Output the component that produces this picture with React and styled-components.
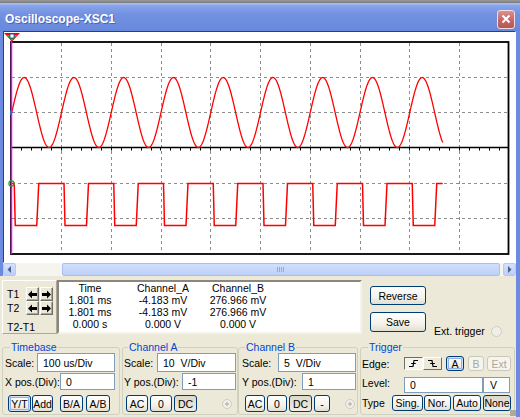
import styled, { createGlobalStyle, css } from 'styled-components'

const FRAME = '#6b8ae0'

const GlobalStyle = createGlobalStyle`
  html, body { margin: 0; padding: 0; }
  body {
    background: #ece9d8;
    font-family: "Liberation Sans", Arial, sans-serif;
    font-size: 10.5px;
    color: #000;
  }
`

const Window = styled.div`
  width: 520px;
  height: 417px;
  display: flex;
  flex-direction: column;
  overflow: hidden;
  background: #ece9d8;
`

const Desktop = styled.div`
  height: 3px;
  background: linear-gradient(#9a9a9a, #7b7b7b);
`

const TitleBar = styled.div`
  height: 28px;
  box-sizing: border-box;
  padding: 4px 5px 0 5px;
  display: flex;
  align-items: center;
  justify-content: space-between;
  background: linear-gradient(#abc0f3 0, #86a2e8 3px, #7391e2 40%, #6788dc 100%);
`

const Title = styled.div`
  color: #fff;
  font-weight: bold;
  font-size: 12px;
  text-shadow: 1px 1px 0 #4a63b8;
`

const CloseButton = styled.div`
  width: 18px;
  height: 19px;
  box-sizing: border-box;
  border: 1px solid #f3dede;
  border-radius: 3px;
  background: linear-gradient(#d99292, #c66666 55%, #b95757);
  display: flex;
  align-items: center;
  justify-content: center;
`

const Body = styled.div`
  flex: 1;
  display: flex;
  flex-direction: column;
  border-right: 4px solid ${FRAME};
  position: relative;
`

const ScopeFrame = styled.div`
  display: flex;
  flex-direction: column;
  border-left: 3px solid ${FRAME};
`

const Screen = styled.div`
  height: 232px;
  box-sizing: border-box;
  background: #fff;
  border: 1px solid;
  border-color: #404040 #fff #fff #404040;

  & svg { display: block; }
`

const Scrollbar = styled.div`
  height: 13px;
  display: flex;
  background: #f5f4ef;
`

const ScrollButton = styled.div`
  width: 13px;
  box-sizing: border-box;
  border: 1px solid #b7c9f3;
  border-radius: 2px;
  background: linear-gradient(#d3e0fd, #bccff9);
  display: flex;
  align-items: center;
  justify-content: center;
`

const Track = styled.div`
  flex: 1;
  display: flex;
  padding: 0 3px 0 46px;
`

const Thumb = styled.div`
  flex: 1;
  box-sizing: border-box;
  border: 1px solid #a9bff0;
  border-radius: 2px;
  background: linear-gradient(#d2dffc, #bcd0f8);
  display: flex;
  align-items: center;
  justify-content: center;
`

const Grip = styled.div`
  width: 8px;
  height: 5px;
  background: repeating-linear-gradient(90deg, #8ea9e6 0 1px, transparent 1px 2px);
`

const Controls = styled.div`
  flex: 1;
  display: flex;
  flex-direction: column;
  padding: 4px 0 0 2px;
`

const ReadoutRow = styled.div`
  height: 54px;
  display: flex;
`

const CursorBox = styled.div`
  width: 55px;
  box-sizing: border-box;
  border: 1px solid;
  border-color: #fff #aca899 #aca899 #fff;
  padding: 6px 0 0 4px;
`

const CursorGrid = styled.div`
  display: grid;
  grid-template-columns: 19px auto;
  align-items: center;
`

const CursorLabel = styled.div`
  line-height: 12px;
  margin-top: ${p => p.$mt || 0}px;
`

const ArrowPair = styled.div`
  display: flex;
  gap: 1px;
`

const ArrowButton = styled.div`
  width: 13px;
  height: 14px;
  box-sizing: border-box;
  border: 1px solid;
  border-color: #fff #716f64 #716f64 #fff;
  box-shadow: inset -1px -1px 0 #aca899;
  display: flex;
  align-items: center;
  justify-content: center;
`

const DataBox = styled.div`
  width: 305px;
  box-sizing: border-box;
  background: #fff;
  border: 2px solid;
  border-color: #8a877c #f4f3ee #f4f3ee #8a877c;
  display: grid;
  grid-template-columns: 62px 84px 66px;
  grid-auto-rows: 12px;
  align-content: start;
  line-height: 12px;
  text-align: center;
`

const ButtonColumn = styled.div`
  display: flex;
  flex-direction: column;
  gap: 7px;
  padding-top: 6px;
  margin-left: 8px;
`

const XpButton = styled.div`
  box-sizing: border-box;
  width: ${p => p.$w}px;
  height: ${p => p.$h || 17}px;
  margin-left: ${p => p.$ml || 0}px;
  flex-shrink: 0;
  display: flex;
  align-items: center;
  justify-content: center;
  color: #000;
  border: 1px solid #003c74;
  border-radius: 3px;
  background: linear-gradient(#fefefd, #f3f2ec 60%, #e2dfd2);
  ${p => p.$focus && css`
    box-shadow: inset 0 0 0 1px #cfe0fb, inset 0 0 0 2px #8db2ee;
  `}
  ${p => p.$pressed && css`
    background: linear-gradient(#dcd8ca, #e6e3d7 60%, #efede5);
  `}
  ${p => p.$off && css`
    color: #aca899;
    border-color: #cbc8b9;
    background: #f5f4ee;
  `}
`

const ExtTrigger = styled.div`
  align-self: flex-end;
  margin: 0 0 -3px 8px;
  display: flex;
  align-items: center;
  gap: 6px;
  line-height: 12px;
`

const Radio = styled.span`
  width: ${p => p.$size || 10}px;
  height: ${p => p.$size || 10}px;
  box-sizing: border-box;
  flex-shrink: 0;
  border-radius: 50%;
  border: 1px solid #cfcdc0;
  background: ${p => p.$dot
    ? 'radial-gradient(circle, #c2c0b4 0 1.5px, #f0efe8 2px)'
    : '#efeee7'};
  margin-left: ${p => p.$auto ? 'auto' : '0'};
  margin-right: ${p => p.$mr || 0}px;
`

const GroupRow = styled.div`
  display: flex;
  margin-top: 7px;
`

const Group = styled.fieldset`
  width: ${p => p.$w}px;
  height: 74px;
  box-sizing: border-box;
  margin: 0 0 0 ${p => p.$ml || 0}px;
  padding: ${p => p.$pad || '0 1px'};
  border: 1px solid #d0d0bf;
  border-radius: 3px;
  min-width: 0;

  & > legend {
    padding: 0 1px;
    margin-left: ${p => p.$lm || 5}px;
    color: #0046d5;
    line-height: 12px;
  }
`

const FieldRow = styled.div`
  height: ${p => p.$h || 17}px;
  margin-top: ${p => p.$mt || 0}px;
  display: flex;
  align-items: center;
  justify-content: space-between;
`

const Label = styled.span`
  line-height: 12px;
  width: ${p => (p.$w ? `${p.$w}px` : 'auto')};
  flex-shrink: 0;
  align-self: ${p => p.$top ? 'flex-start' : 'center'};
`

const Field = styled.input`
  width: ${p => p.$w}px;
  height: 100%;
  box-sizing: border-box;
  margin: 0;
  padding: 0 0 0 ${p => p.$pl || 5}px;
  border: 1px solid #7f9db9;
  background: #fff;
  font: inherit;
  color: #000;
  outline: none;
`

const ButtonRow = styled.div`
  height: 17px;
  margin-top: 5px;
  display: flex;
  align-items: center;
`

const TriggerRow = styled.div`
  height: ${p => p.$h}px;
  margin-top: ${p => p.$mt || 0}px;
  display: flex;
  align-items: center;
`

const EdgeButton = styled.div`
  width: 19px;
  height: 13px;
  box-sizing: border-box;
  border: 1px solid;
  border-color: ${p => p.$down ? '#716f64 #fff #fff #716f64' : '#fff #716f64 #716f64 #fff'};
  background: ${p => p.$down ? '#f4f3ee' : '#ece9d8'};
  display: flex;
  align-items: center;
  justify-content: center;
`

const SizeGrip = styled.div`
  position: absolute;
  right: 0;
  bottom: 1px;
  width: 6px;
  height: 6px;
  background: radial-gradient(circle, #aca899 0.7px, transparent 1px) 0 0 / 2px 2px;
`

const X0 = 11.75
const DX = 49.75
const Y0 = 42
const DY = 35.33
const px = v => Math.floor(v) + 0.5

function sinePath() {
  let d = ''
  for (let x = X0; x <= 443; x += 0.5) {
    const y = 112.5 - 35 * Math.sin((2 * Math.PI * (x - X0)) / DX)
    d += (d ? 'L' : 'M') + x.toFixed(2) + ' ' + y.toFixed(2)
  }
  return d
}

function squarePath() {
  const hi = 183.5
  const lo = 225.5
  let d = `M${X0} ${hi}`
  for (let k = 0; k < 9; k++) {
    const b = X0 + k * DX
    d += `L${b + 2.5} ${hi}L${b + 3.5} ${lo}L${b + 25} ${lo}L${b + 27} ${hi}`
  }
  return d + `L442.7 ${hi}`
}

function Plot() {
  const vertical = Array.from({ length: 9 }, (_, i) => px(X0 + (i + 1) * DX))
  const horizontal = [1, 2, 4, 5].map(k => px(Y0 + k * DY))
  const ticks = []
  for (let x = X0; x < 508; x += DX / 5) ticks.push(px(x))

  return (
    <svg width="511" height="230" viewBox="4 32 511 230">
      <g stroke="#8c8c8c" strokeWidth="1" strokeDasharray="3 3">
        {vertical.map(x => <line key={x} x1={x} y1="43" x2={x} y2="253" />)}
        {horizontal.map(y => <line key={y} x1="12" y1={y} x2="508" y2={y} />)}
      </g>
      <line x1="12" y1="147.5" x2="508" y2="147.5" stroke="#000" strokeWidth="1.6" />
      <g stroke="#000" strokeWidth="1">
        {ticks.map(x => <line key={x} x1={x} y1="147" x2={x} y2="150.5" />)}
      </g>
      <rect x="11" y="42" width="497.5" height="212" fill="none" stroke="#000" strokeWidth="1.8" />
      <path d={sinePath()} fill="none" stroke="#f00" strokeWidth="1.3" />
      <path d={squarePath()} fill="none" stroke="#f00" strokeWidth="1.5" />
      <line x1="11.5" y1="36" x2="11.5" y2="254" stroke="#f0f" strokeWidth="1.5" />
      <polygon points="4,33 20,33 12,41.5" fill="#f00" />
      <polygon points="6.5,35 17.5,35 12,40.5" fill="#1ec31e" />
      <rect x="10" y="34" width="4" height="4" fill="#fff" stroke="#2040c0" strokeWidth="0.8" />
      <polygon points="10,110 13,112.5 10,115" fill="#2a6ad0" />
      <circle cx="11.5" cy="183.5" r="2.6" fill="none" stroke="#13b013" strokeWidth="1.2" />
    </svg>
  )
}

function Arrow({ dir }) {
  return (
    <svg width="9" height="9" viewBox="0 0 9 9">
      <path
        d="M0 4.5 L4 0.5 V3 H9 V6 H4 V8.5 Z"
        fill="#000"
        transform={dir === 'right' ? 'translate(9 0) scale(-1 1)' : undefined}
      />
    </svg>
  )
}

function EdgeIcon({ falling }) {
  return (
    <svg width="11" height="9" viewBox="0 0 11 9">
      <path
        d={falling ? 'M1 1.5 H5 L6 7.5 H10' : 'M1 7.5 H5 L6 1.5 H10'}
        fill="none"
        stroke="#000"
        strokeWidth="1.2"
      />
      <path d="M3.2 4.5 H7.8" stroke="#000" strokeWidth="1" />
    </svg>
  )
}

const readout = [
  ['Time', 'Channel_A', 'Channel_B'],
  ['1.801 ms', '-4.183 mV', '276.966 mV'],
  ['1.801 ms', '-4.183 mV', '276.966 mV'],
  ['0.000 s', '0.000 V', '0.000 V'],
]

function App() {
  return (
    <Window>
      <GlobalStyle />
      <Desktop />
      <TitleBar>
        <Title>Oscilloscope-XSC1</Title>
        <CloseButton>
          <svg width="10" height="10" viewBox="0 0 10 10">
            <path d="M1.5 1.5 L8.5 8.5 M8.5 1.5 L1.5 8.5" stroke="#fff" strokeWidth="2" />
          </svg>
        </CloseButton>
      </TitleBar>

      <Body>
        <ScopeFrame>
          <Screen>
            <Plot />
          </Screen>
          <Scrollbar>
            <ScrollButton>
              <svg width="5" height="7" viewBox="0 0 5 7"><path d="M4 0 L0.5 3.5 L4 7 Z" fill="#4d6185" /></svg>
            </ScrollButton>
            <Track>
              <Thumb><Grip /></Thumb>
            </Track>
            <ScrollButton>
              <svg width="5" height="7" viewBox="0 0 5 7"><path d="M1 0 L4.5 3.5 L1 7 Z" fill="#4d6185" /></svg>
            </ScrollButton>
          </Scrollbar>
        </ScopeFrame>

        <Controls>
          <ReadoutRow>
            <CursorBox>
              <CursorGrid>
                <CursorLabel>T1</CursorLabel>
                <ArrowPair>
                  <ArrowButton><Arrow /></ArrowButton>
                  <ArrowButton><Arrow dir="right" /></ArrowButton>
                </ArrowPair>
                <CursorLabel>T2</CursorLabel>
                <ArrowPair>
                  <ArrowButton><Arrow /></ArrowButton>
                  <ArrowButton><Arrow dir="right" /></ArrowButton>
                </ArrowPair>
              </CursorGrid>
              <CursorLabel $mt={6}>T2-T1</CursorLabel>
            </CursorBox>

            <DataBox>
              {readout.flat().map((cell, i) => <div key={i}>{cell}</div>)}
            </DataBox>

            <ButtonColumn>
              <XpButton $w={56} $h={19}>Reverse</XpButton>
              <XpButton $w={56} $h={20}>Save</XpButton>
            </ButtonColumn>

            <ExtTrigger>
              Ext. trigger
              <Radio $size={11} />
            </ExtTrigger>
          </ReadoutRow>

          <GroupRow>
            <Group $w={118} $pad="0 4px 0 2px">
              <legend>Timebase</legend>
              <FieldRow $h={19}>
                <Label>Scale:</Label>
                <Field $w={78} readOnly value="100 us/Div" />
              </FieldRow>
              <FieldRow $mt={1}>
                <Label>X pos.(Div):</Label>
                <Field $w={55} readOnly value="0" />
              </FieldRow>
              <ButtonRow>
                <XpButton $w={23} $ml={3} $focus>Y/T</XpButton>
                <XpButton $w={21} $ml={1}>Add</XpButton>
                <XpButton $w={23} $ml={7}>B/A</XpButton>
                <XpButton $w={24} $ml={3}>A/B</XpButton>
              </ButtonRow>
            </Group>

            <Group $w={116} $ml={2} $lm={4}>
              <legend>Channel A</legend>
              <FieldRow $h={19}>
                <Label>Scale:</Label>
                <Field $w={79} readOnly value="10  V/Div" />
              </FieldRow>
              <FieldRow $mt={1}>
                <Label>Y pos.(Div):</Label>
                <Field $w={54} readOnly value="-1" />
              </FieldRow>
              <ButtonRow>
                <XpButton $w={22} $ml={2}>AC</XpButton>
                <XpButton $w={22} $ml={2}>0</XpButton>
                <XpButton $w={23} $ml={2} $pressed>DC</XpButton>
                <Radio $auto $mr={4} $dot />
              </ButtonRow>
            </Group>

            <Group $w={120} $pad="0 1px 0 3px" $lm={3}>
              <legend>Channel B</legend>
              <FieldRow $h={19}>
                <Label>Scale:</Label>
                <Field $w={78} readOnly value="5  V/Div" />
              </FieldRow>
              <FieldRow $mt={1}>
                <Label>Y pos.(Div):</Label>
                <Field $w={54} readOnly value="1" />
              </FieldRow>
              <ButtonRow>
                <XpButton $w={20} $ml={3}>AC</XpButton>
                <XpButton $w={20} $ml={2}>0</XpButton>
                <XpButton $w={23} $ml={2} $pressed>DC</XpButton>
                <XpButton $w={16} $ml={2}>-</XpButton>
                <Radio $auto $mr={1} $dot />
              </ButtonRow>
            </Group>

            <Group $w={155} $ml={2} $pad="0 3px 0 1px" $lm={6}>
              <legend>Trigger</legend>
              <TriggerRow $h={21}>
                <Label $w={42}>Edge:</Label>
                <EdgeButton $down><EdgeIcon /></EdgeButton>
                <EdgeButton><EdgeIcon falling /></EdgeButton>
                <XpButton $w={18} $h={15} $ml={4} $focus>A</XpButton>
                <XpButton $w={16} $h={15} $ml={4} $off>B</XpButton>
                <XpButton $w={24} $h={15} $ml={3} $off>Ext</XpButton>
              </TriggerRow>
              <TriggerRow $h={16} $mt={3}>
                <Label $w={42} $top>Level:</Label>
                <Field $w={79} readOnly value="0" />
                <Field $w={27} $pl={6} readOnly value="V" />
              </TriggerRow>
              <TriggerRow $h={16} $mt={2}>
                <Label $w={30}>Type</Label>
                <XpButton $w={31} $h={16}>Sing.</XpButton>
                <XpButton $w={27} $h={16} $ml={1}>Nor.</XpButton>
                <XpButton $w={28} $h={16} $ml={2}>Auto</XpButton>
                <XpButton $w={28} $h={16} $ml={2} $pressed>None</XpButton>
              </TriggerRow>
            </Group>
          </GroupRow>
          <SizeGrip />
        </Controls>
      </Body>
    </Window>
  )
}

export default App
